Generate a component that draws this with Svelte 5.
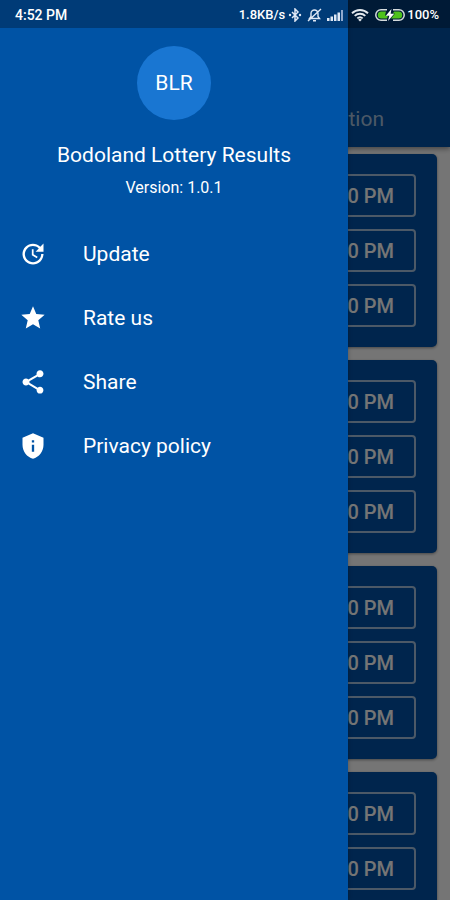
<script>
  const menu = [
    {
      label: 'Update',
      path: 'M21 10.12h-6.78l2.74-2.82c-2.73-2.7-7.15-2.8-9.88-.1-2.73 2.71-2.73 7.08 0 9.79s7.15 2.71 9.88 0C18.32 15.65 19 14.08 19 12.1h2c0 1.98-.88 4.55-2.64 6.29-3.51 3.48-9.21 3.48-12.72 0-3.5-3.47-3.53-9.11-.02-12.58s9.14-3.47 12.65 0L21 3v7.12zM12.5 8v4.25l3.5 2.08-.72 1.21L11 13V8h1.5z'
    },
    {
      label: 'Rate us',
      path: 'M12 17.27L18.18 21l-1.64-7.03L22 9.24l-7.19-.61L12 2 9.19 8.63 2 9.24l5.46 4.73L5.82 21z'
    },
    {
      label: 'Share',
      path: 'M18 16.08c-.76 0-1.44.3-1.96.77L8.91 12.7c.05-.23.09-.46.09-.7s-.04-.47-.09-.7l7.05-4.11c.54.5 1.25.81 2.04.81 1.66 0 3-1.34 3-3s-1.34-3-3-3-3 1.34-3 3c0 .24.04.47.09.7L8.04 9.81C7.5 9.31 6.79 9 6 9c-1.66 0-3 1.34-3 3s1.34 3 3 3c.79 0 1.5-.31 2.04-.81l7.12 4.16c-.05.21-.08.43-.08.65 0 1.61 1.31 2.92 2.92 2.92s2.92-1.31 2.92-2.92-1.31-2.92-2.92-2.92z'
    },
    {
      label: 'Privacy policy',
      path: 'M12 1L3 5v6c0 5.55 3.84 10.74 9 12 5.16-1.26 9-6.45 9-12V5l-9-4zm-1 6h2v2h-2V7zm0 4h2v6h-2v-6z'
    }
  ];
  const cards = [
    ['0 PM', '0 PM', '0 PM'],
    ['0 PM', '0 PM', '0 PM'],
    ['0 PM', '0 PM', '0 PM'],
    ['0 PM', '0 PM']
  ];
</script>

<div class="app">
  <div class="page">
    <header class="appbar">
      <span class="tab">tion</span>
    </header>
    <main class="list">
      {#each cards as times}
        <section class="card">
          {#each times as time}
            <button class="time" type="button">{time}</button>
          {/each}
        </section>
      {/each}
    </main>
  </div>

  <div class="scrim"></div>

  <aside class="drawer">
    <div class="profile">
      <div class="avatar">BLR</div>
      <h1>Bodoland Lottery Results</h1>
      <p>Version: 1.0.1</p>
    </div>
    <nav>
      {#each menu as item}
        <button class="item" type="button">
          <svg viewBox="0 0 24 24" aria-hidden="true"><path d={item.path} /></svg>
          <span>{item.label}</span>
        </button>
      {/each}
    </nav>
  </aside>

  <div class="status">
    <span class="clock">4:52 PM</span>
    <span class="speed">1.8KB/s</span>
    <svg class="bt" width="14" height="14" viewBox="0 0 14 14" aria-hidden="true">
      <path d="M4 4l6 6-3 3V1l3 3-6 6" fill="none" stroke="#dfe8f5" stroke-width="1.5" />
      <circle cx="2" cy="7" r="1.2" fill="#dfe8f5" /><circle cx="12" cy="7" r="1.2" fill="#dfe8f5" />
    </svg>
    <svg class="bell" width="15" height="14" viewBox="0 0 15 14" aria-hidden="true">
      <path d="M2.500 10.500h10L11 8.500V5.500a3.500 3.500 0 0 0-7 0v3zM6 12.700h3M1 13L14 1" fill="none" stroke="#dfe8f5" stroke-width="1.4" />
    </svg>
    <svg class="signal" width="16" height="12" viewBox="0 0 16 12" aria-hidden="true">
      <path d="M0 9h2.500v3H0zM3.500 7.500H6V12H3.500zM7 5.500h2.500V12H7zM10.500 3.500H13V12h-2.500z" fill="#dfe8f5" />
      <path d="M14 1h2v11h-2z" fill="#8fa9ce" />
    </svg>
    <svg class="wifi" width="18" height="14" viewBox="0 0 18 14" aria-hidden="true">
      <path d="M1 5.200a11.500 11.500 0 0 1 16 0M3.700 7.900a7.600 7.600 0 0 1 10.600 0M6.300 10.400a4 4 0 0 1 5.400 0" fill="none" stroke="#e4e9ee" stroke-width="1.9" />
      <path d="M7.200 11.700a2.600 2.600 0 0 1 3.600 0L9 13.600z" fill="#e4e9ee" />
    </svg>
    <svg class="battery" width="30" height="14" viewBox="0 0 30 14" aria-hidden="true">
      <path d="M12 1.800H6a5.200 5.200 0 0 0 0 10.400h6M18 1.800h6a5.200 5.200 0 0 1 0 10.400h-6" fill="none" stroke="#d5dbdc" stroke-width="1.500" />
      <path d="M11 3.500H6.300a3.500 3.500 0 0 0 0 7H12l1-3h-3zM19 3.500h4.700a3.500 3.500 0 0 1 0 7H16l4-5h-2z" fill="#4fc21c" />
      <path d="M16.500 1L10.800 7.800h3.500L13 13l6.200-7.300h-3.600z" fill="#fff" />
    </svg>
    <span class="level">100%</span>
  </div>
</div>

<style>
  :global(body) {
    margin: 0;
  }
  .app {
    position: relative;
    height: 100vh;
    overflow: hidden;
    background: #fff;
    color: #fff;
    font-family: Roboto, 'Noto Sans', sans-serif;
  }
  button {
    margin: 0;
    background: none;
    color: inherit;
    font-family: inherit;
  }
  .appbar {
    position: relative;
    box-sizing: border-box;
    height: 147px;
    padding: 0 66px 14px 0;
    display: flex;
    justify-content: flex-end;
    align-items: flex-end;
    background: #0052a5;
    box-shadow: 0 2px 5px rgba(0, 0, 0, 0.4);
  }
  .tab {
    font-size: 21px;
    line-height: 28px;
    color: rgba(255, 255, 255, 0.66);
  }
  .list {
    display: flex;
    flex-direction: column;
    gap: 13px;
    padding: 7px 13px 13px;
  }
  .card {
    display: flex;
    flex-direction: column;
    gap: 12px;
    padding: 20px 21px;
    border-radius: 5px;
    background: #0052a8;
    box-shadow: 0 1px 3px rgba(0, 0, 0, 0.4);
  }
  .time {
    box-sizing: border-box;
    height: 43px;
    padding: 0 20px;
    border: 2px solid rgba(255, 255, 255, 0.65);
    border-radius: 4px;
    text-align: right;
    font-size: 20px;
    font-weight: 500;
    line-height: 24px;
  }
  .scrim {
    position: absolute;
    inset: 0;
    background: rgba(0, 0, 0, 0.54);
  }
  .drawer {
    position: absolute;
    top: 0;
    bottom: 0;
    left: 0;
    width: 348px;
    box-sizing: border-box;
    padding-top: 46px;
    background: #0053a5;
    box-shadow: 0 0 4px rgba(0, 0, 0, 0.3);
  }
  .profile {
    display: flex;
    flex-direction: column;
    align-items: center;
  }
  .avatar {
    display: flex;
    align-items: center;
    justify-content: center;
    width: 74px;
    height: 74px;
    border-radius: 50%;
    background: #1976d2;
    font-size: 21px;
  }
  h1 {
    margin: 21px 0 0;
    font-size: 21px;
    font-weight: 400;
    line-height: 28px;
  }
  p {
    margin: 9px 0 0;
    font-size: 16px;
    line-height: 20px;
  }
  nav {
    margin-top: 24px;
  }
  .item {
    display: flex;
    align-items: center;
    gap: 36px;
    width: 100%;
    height: 64px;
    padding: 0 19px;
    border: 0;
    font-size: 21px;
    line-height: 28px;
    text-align: left;
  }
  .item svg {
    width: 28px;
    height: 28px;
    fill: #fff;
  }
  .status {
    position: absolute;
    top: 0;
    left: 0;
    right: 0;
    height: 28px;
    box-sizing: border-box;
    padding: 1px 11px 0 15px;
    display: flex;
    align-items: center;
    background: rgba(0, 0, 0, 0.28);
    font-size: 13px;
    font-weight: 500;
    line-height: 20px;
  }
  .clock {
    margin-right: auto;
    font-size: 14px;
  }
  .bt {
    margin-left: 3px;
  }
  .bell {
    margin-left: 5px;
  }
  .signal {
    margin-left: 5px;
  }
  .wifi {
    margin-left: 8px;
  }
  .battery {
    margin: 0 2px 0 6px;
  }
</style>
